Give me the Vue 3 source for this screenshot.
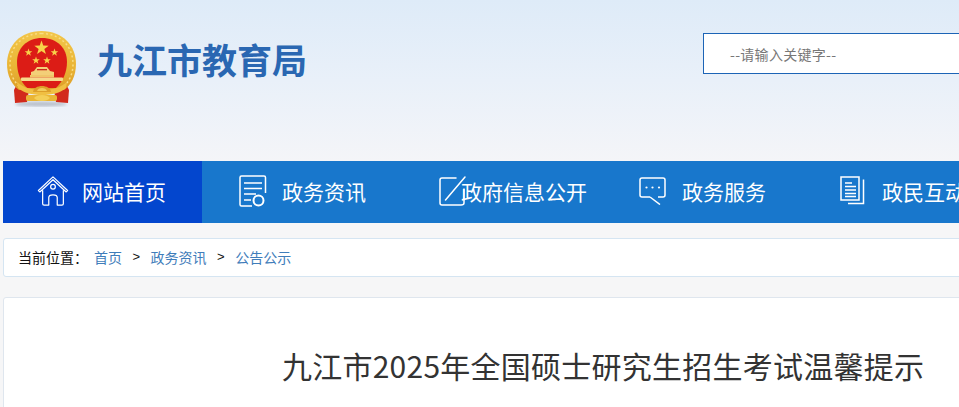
<script setup>
const crumbs = ['首页', '政务资讯', '公告公示']
const stars = [
  { id: 'big', x: 41.5, y: 48, r: 7.5 },
  { id: 's1', x: 28.5, y: 52.5, r: 4 },
  { id: 's2', x: 54.5, y: 52.5, r: 4 },
  { id: 's3', x: 36, y: 60.5, r: 4 },
  { id: 's4', x: 47, y: 60.5, r: 4 }
]
function starPoints(s) {
  const pts = []
  for (let i = 0; i < 10; i++) {
    const rad = i % 2 ? s.r * 0.4 : s.r
    const a = -Math.PI / 2 + (i * Math.PI) / 5
    pts.push((s.x + rad * Math.cos(a)).toFixed(2) + ',' + (s.y + rad * Math.sin(a)).toFixed(2))
  }
  return pts.join(' ')
}
</script>

<template>
  <div class="page">
    <header class="header">
      <div class="brand">
        <svg class="emblem" width="82" height="92" viewBox="0 26 82 92">
          <defs>
            <linearGradient id="gold" x1="0" y1="0" x2="0" y2="1">
              <stop offset="0" stop-color="#f2c64a" />
              <stop offset="0.6" stop-color="#eab536" />
              <stop offset="1" stop-color="#dd9d28" />
            </linearGradient>
            <filter id="blur"><feGaussianBlur stdDeviation="0.35" /></filter>
            <filter id="shade"><feGaussianBlur stdDeviation="1.800" /></filter>
          </defs>
          <ellipse cx="41" cy="104" rx="26" ry="2.500" fill="#8f97a5" opacity="0.55" filter="url(#shade)" />
          <g filter="url(#blur)">
            <path d="M16 86 L14 90 L15 103 L27 102 L29 90 Z" fill="#d22a1c" />
            <path d="M67 86 L69 90 L68 103 L56 102 L54 90 Z" fill="#d22a1c" />
            <path d="M41.500 31 C20 31 7 46 7 64 C7 76 12 85 19 90 L64 90 C71 85 76 76 76 64 C76 46 63 31 41.500 31 Z" fill="url(#gold)" />
            <path d="M41.500 33.500 C22 33.500 10 47 10 64 C10 74 14 82 20 87 M41.500 33.500 C61 33.500 73 47 73 64 C73 74 69 82 63 87" fill="none" stroke="#f9dd84" stroke-width="1.500" stroke-dasharray="2 2.500" />
            <path d="M42 38 C27 38 17 48 17 62 C17 72 20 81 27 88 L56 88 C63 81 67 72 67 62 C67 48 57 38 42 38 Z" fill="#dc1f17" />
            <polygon v-for="s in stars" :key="s.id" :points="starPoints(s)" fill="#f8d24a" />
            <path d="M34 71 L31 72 L31 75 L54 75 L54 72 L50 71 L47 67 L37 67 Z" fill="#f3cf78" />
            <rect x="37" y="69" width="10" height="1.300" fill="#c92a1e" />
            <rect x="30" y="75" width="24" height="2.500" fill="#f0c56a" />
            <rect x="21" y="77.500" width="42" height="3.500" rx="1" fill="#f6d98c" />
            <path d="M17 82 C24 88 32 90 42 90 C52 90 60 88 67 82 L66 88 C60 93 52 95 42 95 C32 95 24 93 18 88 Z" fill="#f0bf42" />
            <path d="M33 92 C34 84 50 84 51 92 Z" fill="#dd9f2b" />
            <path d="M37 91 C38 87 46 87 47 91 Z" fill="#f2cc5c" />
            <rect x="26" y="95" width="31" height="6" rx="2" fill="#eab536" />
            <path d="M34 98 C37 94 47 94 50 98 C47 102 37 102 34 98 Z" fill="#f4cf58" />
          </g>
        </svg>
        <h1 class="site-name">九江市教育局</h1>
      </div>
      <div class="search">
        <span class="placeholder">--请输入关键字--</span>
      </div>
    </header>

    <nav class="nav">
      <a class="nav-item active">
        <svg class="nav-icon" width="32" height="32" viewBox="0 0 34 34" fill="none" stroke="#fff" stroke-width="1.300" stroke-linejoin="round" stroke-linecap="round">
          <path d="M1.500 16.500 L17 2 L32.500 16.500 L31 18 L17 5 L3 18 Z" />
          <path d="M6 16.500 V30.500 Q6 32 7.500 32 H12.500 V24 Q12.500 21 17 21 Q21.500 21 21.500 24 V32 H26.500 Q28 32 28 30.500 V16.500" />
          <circle cx="17" cy="12.500" r="2.500" />
        </svg>
        <span>网站首页</span>
      </a>
      <a class="nav-item">
        <svg class="nav-icon" width="28" height="32" viewBox="0 0 28 32" fill="none" stroke="#fff" stroke-width="1.500">
          <path d="M13 31 H2.500 Q1 31 1 29.500 V2.500 Q1 1 2.500 1 H25 Q26.500 1 26.500 2.500 V18" />
          <path d="M5 8 H23 M5 13.500 H23 M5 19 H17 M5 25 H12" />
          <circle cx="19.500" cy="25.500" r="5" stroke-width="2" />
        </svg>
        <span>政务资讯</span>
      </a>
      <a class="nav-item">
        <svg class="nav-icon open" width="27" height="30" viewBox="0 0 27 30" fill="none" stroke="#fff" stroke-width="1.500" stroke-linecap="round">
          <path d="M17 2 H3 Q1 2 1 4 V27 Q1 29 3 29 H22 Q25 29 25 27 V13" />
          <path d="M6.500 24 L26 1" />
        </svg>
        <span>政府信息公开</span>
      </a>
      <a class="nav-item">
        <svg class="nav-icon" width="28" height="28" viewBox="0 0 28 28" fill="none" stroke="#fff" stroke-width="1.500">
          <path d="M11 20 H3 Q1 20 1 18 V3 Q1 1 3 1 H24 Q26 1 26 3 V18 Q26 20 24 20 H19" />
          <path d="M11 20 L21 27.500" />
          <circle cx="7.500" cy="10.500" r="1.100" fill="#fff" stroke="none" />
          <circle cx="13.500" cy="10.500" r="1.100" fill="#fff" stroke="none" />
          <circle cx="20" cy="10.500" r="1.100" fill="#fff" stroke="none" />
        </svg>
        <span>政务服务</span>
      </a>
      <a class="nav-item last">
        <svg class="nav-icon" width="25" height="29" viewBox="0 0 25 29" fill="none" stroke="#fff" stroke-width="1.500">
          <rect x="1" y="1" width="18" height="23" />
          <path d="M23.500 3.500 V27.500 H8" />
          <path d="M5 7 H12 M5 10.500 H16 M5 14 H16 M5 17.500 H16 M5 20.500 H16" stroke-width="1.300" />
        </svg>
        <span>政民互动</span>
      </a>
    </nav>

    <div class="crumbs">
      <span class="crumb-label">当前位置：</span>
      <template v-for="(c, i) in crumbs" :key="c">
        <span v-if="i" class="sep">&gt;</span>
        <a class="crumb">{{ c }}</a>
      </template>
    </div>

    <article class="card">
      <h2 class="title">九江市2025年全国硕士研究生招生考试温馨提示</h2>
    </article>
  </div>
</template>

<style>
html, body { margin: 0; background: #f6f6f7; overflow: hidden; }
</style>

<style scoped>
.page {
  width: 959px;
  height: 407px;
  overflow: hidden;
  background: #f6f6f7;
  font-family: "Noto Sans CJK SC", "Liberation Sans", sans-serif;
}
.header {
  height: 161px;
  box-sizing: border-box;
  background: linear-gradient(180deg, #deebf8 0%, #e9f0f9 50%, #f4f5f8 100%);
  display: flex;
  align-items: flex-start;
}
.brand {
  display: flex;
  align-items: flex-start;
  padding-top: 26px;
  width: 703px;
  flex: none;
}
.emblem { flex: none; }
.site-name {
  margin: 8px 0 0 15px;
  font-size: 35px;
  line-height: 50px;
  font-weight: 700;
  color: #2a67b2;
  white-space: nowrap;
}
.search {
  margin-top: 33px;
  width: 400px;
  height: 41px;
  flex: none;
  box-sizing: border-box;
  background: #fff;
  border: 1px solid #1c64b6;
  padding-left: 26px;
  display: flex;
  align-items: center;
}
.placeholder { font-size: 14px; letter-spacing: 0.300px; color: #777; white-space: nowrap; }
.nav {
  margin-left: 3px;
  height: 62px;
  width: 1100px;
  background: #1877cc;
  display: flex;
}
.nav-item {
  width: 200px;
  flex: none;
  box-sizing: border-box;
  display: flex;
  align-items: center;
  padding: 0 0 3px 37px;
  color: #fff;
  font-size: 21px;
  white-space: nowrap;
}
.nav-item.active { width: 199px; padding-left: 34px; background: #0346ce; }
.nav-item.last { padding-left: 38px; }
.nav-icon { flex: none; margin-right: 15px; }
.nav-item.active .nav-icon { margin-right: 13px; }
.nav-item.last .nav-icon { margin-right: 17px; }
.nav-icon.open { margin-right: -5px; }
.crumbs {
  margin: 15px 0 0 3px;
  height: 39px;
  width: 1100px;
  box-sizing: border-box;
  background: #fff;
  border: 1px solid #d5e5f2;
  border-radius: 3px;
  padding: 0 0 2px 14px;
  display: flex;
  align-items: center;
  font-size: 14px;
  white-space: nowrap;
}
.crumb-label { color: #111; margin-right: 6px; }
.crumb { color: #3f7dba; }
.sep { color: #111; margin: 0 10.500px; font-family: "Liberation Sans", sans-serif; font-size: 13px; }
.card {
  margin: 20px 0 0 3px;
  width: 1100px;
  height: 200px;
  box-sizing: border-box;
  background: #fff;
  border: 1px solid #dfe6ee;
  border-radius: 3px;
  padding: 45px 0 0 278px;
}
.title {
  margin: 0;
  font-size: 30px;
  line-height: 44px;
  font-weight: 400;
  letter-spacing: 0.240px;
  color: #333;
  white-space: nowrap;
}
</style>
